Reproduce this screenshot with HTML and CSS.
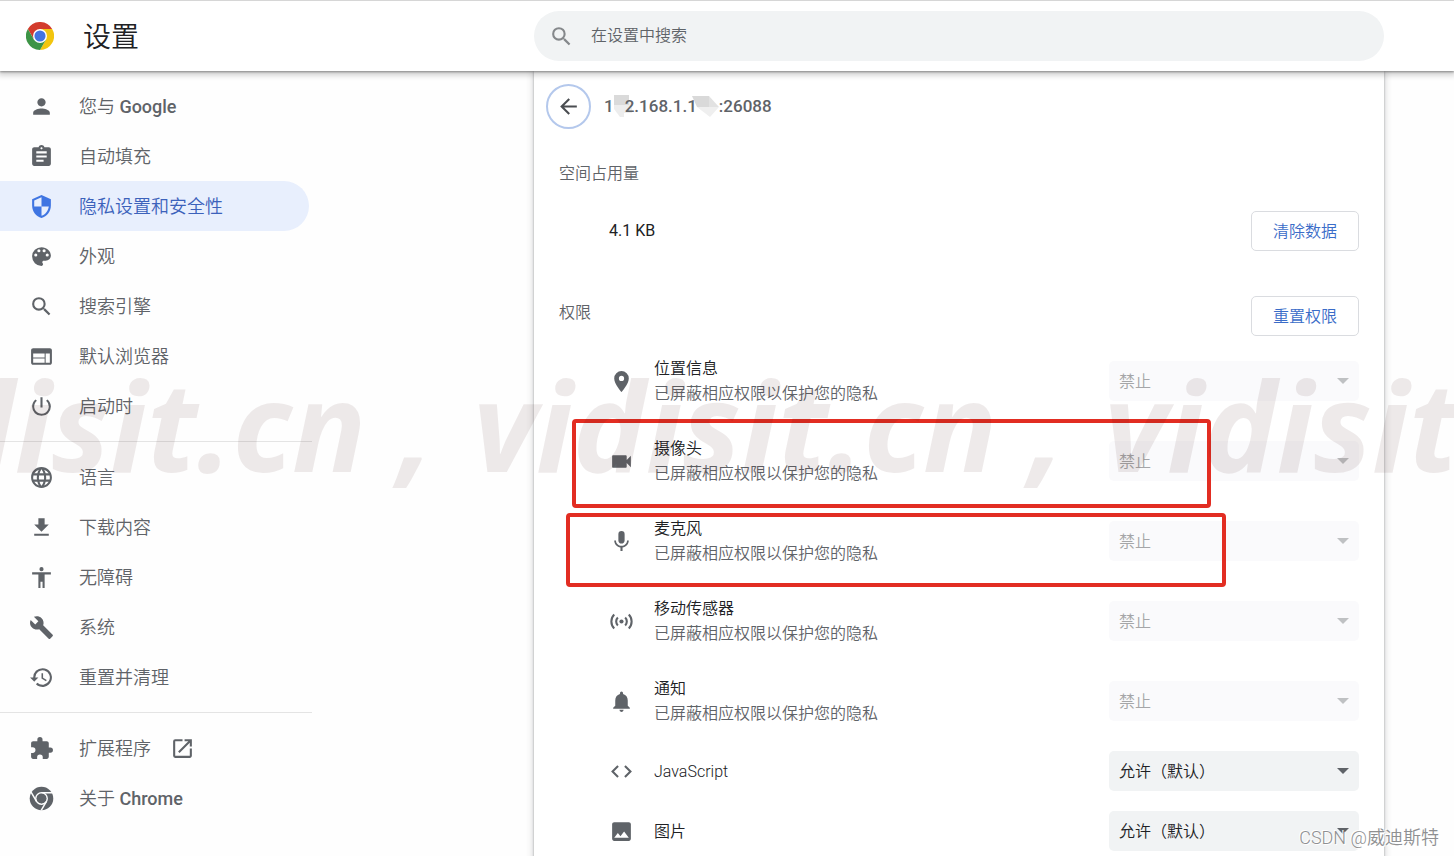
FILE: index.html
```
<!DOCTYPE html>
<html lang="zh-CN">
<head>
<meta charset="utf-8">
<title>设置</title>
<link rel="stylesheet" href="styles.css">
</head>
<body>
<header class="toolbar columns">
  <div class="brand">
    <svg class="logo" viewBox="0 0 48 48" aria-hidden="true">
      <circle cx="24" cy="24" r="24" fill="#fff"/>
      <path fill="#d33b2c" d="M24 12h20.8A24 24 0 0 0 3.2 12l10.4 18L24 12z"/>
      <path fill="#f2c50f" d="M34.4 30L24 48A24 24 0 0 0 44.8 12H24l10.4 18z"/>
      <path fill="#3d9446" d="M13.6 30L3.2 12A24 24 0 0 0 24 48l10.4-18H13.6z"/>
      <circle cx="24" cy="24" r="12" fill="#fff"/>
      <circle cx="24" cy="24" r="9.5" fill="#4374e0"/>
    </svg>
    <h1 class="title">设置</h1>
  </div>
  <div class="search">
    <svg class="icon search-icon" viewBox="0 0 24 24" aria-hidden="true"><path d="M15.5 14h-.79l-.28-.27A6.47 6.47 0 0 0 16 9.5 6.5 6.5 0 1 0 9.5 16c1.61 0 3.09-.59 4.23-1.57l.27.28v.79l5 4.99L20.49 19l-4.99-5zm-6 0a4.5 4.5 0 1 1 0-9 4.5 4.5 0 0 1 0 9z"/></svg>
    <input class="search-input" type="text" placeholder="在设置中搜索" aria-label="在设置中搜索">
  </div>
</header>

<div class="body columns">
  <nav class="sidebar">
    <a class="nav-item" href="#"><svg class="icon" viewBox="0 0 24 24"><path d="M12 12c2.21 0 4-1.79 4-4s-1.79-4-4-4-4 1.79-4 4 1.79 4 4 4zm0 2c-2.67 0-8 1.34-8 4v2h16v-2c0-2.66-5.33-4-8-4z"/></svg><span>您与 <span class="latin">Google</span></span></a>
    <a class="nav-item" href="#"><svg class="icon" viewBox="0 0 24 24"><path d="M19 3h-4.18C14.4 1.84 13.3 1 12 1s-2.4.84-2.82 2H5c-1.1 0-2 .9-2 2v14c0 1.1.9 2 2 2h14c1.1 0 2-.9 2-2V5c0-1.1-.9-2-2-2zm-7 0c.55 0 1 .45 1 1s-.45 1-1 1-1-.45-1-1 .45-1 1-1zm2 14H7v-2h7v2zm3-4H7v-2h10v2zm0-4H7V7h10v2z"/></svg><span>自动填充</span></a>
    <a class="nav-item selected" href="#" aria-current="page"><svg class="icon" viewBox="0 0 24 24"><path d="M12 1L3 5v6c0 5.55 3.84 10.74 9 12 5.16-1.26 9-6.45 9-12V5l-9-4zm0 10.99h7c-.53 4.12-3.28 7.79-7 8.94V12H5V6.3l7-3.11v8.8z"/></svg><span>隐私设置和安全性</span></a>
    <a class="nav-item" href="#"><svg class="icon" viewBox="0 0 24 24"><path d="M12 3a9 9 0 0 0 0 18c.83 0 1.5-.67 1.5-1.5 0-.39-.15-.74-.39-1.01-.23-.26-.38-.61-.38-.99 0-.83.67-1.5 1.5-1.5H16c2.76 0 5-2.24 5-5 0-4.42-4.03-8-9-8zm-5.5 9a1.5 1.5 0 1 1 0-3 1.5 1.5 0 0 1 0 3zm3-4a1.5 1.5 0 1 1 0-3 1.5 1.5 0 0 1 0 3zm5 0a1.5 1.5 0 1 1 0-3 1.5 1.5 0 0 1 0 3zm3 4a1.5 1.5 0 1 1 0-3 1.5 1.5 0 0 1 0 3z"/></svg><span>外观</span></a>
    <a class="nav-item" href="#"><svg class="icon" viewBox="0 0 24 24"><path d="M15.5 14h-.79l-.28-.27A6.47 6.47 0 0 0 16 9.5 6.5 6.5 0 1 0 9.5 16c1.61 0 3.09-.59 4.23-1.57l.27.28v.79l5 4.99L20.49 19l-4.99-5zm-6 0a4.5 4.5 0 1 1 0-9 4.5 4.5 0 0 1 0 9z"/></svg><span>搜索引擎</span></a>
    <a class="nav-item" href="#"><svg class="icon" viewBox="0 0 24 24"><path d="M20 4H4c-1.1 0-2 .9-2 2v12c0 1.100.9 2 2 2h16c1.100 0 2-.9 2-2V6c0-1.100-.9-2-2-2zm-5 14H4v-4h11v4zm0-5H4V9h11v4zm5 5h-4V9h4v9z"/></svg><span>默认浏览器</span></a>
    <a class="nav-item" href="#"><svg class="icon" viewBox="0 0 24 24"><path d="M13 3h-2v10h2V3zm4.830 2.170l-1.420 1.420A6.920 6.920 0 0 1 19 12a7 7 0 1 1-11.420-5.420L6.170 5.170A8.930 8.930 0 0 0 3 12a9 9 0 0 0 18 0c0-2.740-1.230-5.180-3.170-6.830z"/></svg><span>启动时</span></a>
    <hr class="divider">
    <a class="nav-item" href="#"><svg class="icon" viewBox="0 0 24 24"><path d="M11.990 2C6.470 2 2 6.480 2 12s4.470 10 9.990 10C17.520 22 22 17.520 22 12S17.520 2 11.990 2zm6.930 6h-2.950a15.650 15.650 0 0 0-1.380-3.560A8.030 8.030 0 0 1 18.920 8zM12 4.040c.83 1.200 1.480 2.530 1.910 3.960h-3.820c.43-1.430 1.080-2.760 1.910-3.960zM4.260 14a8.240 8.240 0 0 1 0-4h3.380a16.520 16.520 0 0 0 0 4H4.260zm.82 2h2.950c.32 1.250.78 2.450 1.380 3.560A7.990 7.990 0 0 1 5.080 16zm2.950-8H5.080a7.990 7.990 0 0 1 4.330-3.560A15.650 15.650 0 0 0 8.030 8zM12 19.960c-.83-1.200-1.480-2.530-1.910-3.960h3.820c-.43 1.430-1.080 2.760-1.910 3.960zM14.340 14H9.660a14.700 14.700 0 0 1 0-4h4.680a14.600 14.600 0 0 1 0 4zm.25 5.560c.6-1.110 1.060-2.310 1.380-3.560h2.950a8.030 8.030 0 0 1-4.330 3.560zM16.360 14a16.520 16.520 0 0 0 0-4h3.380a8.240 8.240 0 0 1 0 4h-3.380z"/></svg><span>语言</span></a>
    <a class="nav-item" href="#"><svg class="icon" viewBox="0 0 24 24"><path d="M19 9h-4V3H9v6H5l7 7 7-7zM5 18v2h14v-2H5z"/></svg><span>下载内容</span></a>
    <a class="nav-item" href="#"><svg class="icon" viewBox="0 0 24 24"><path d="M12 2a2 2 0 1 1 0 4 2 2 0 0 1 0-4zm9 7h-6v13h-2v-6h-2v6H9V9H3V7h18v2z"/></svg><span>无障碍</span></a>
    <a class="nav-item" href="#"><svg class="icon" viewBox="0 0 24 24"><path d="M22.700 19l-9.100-9.100c.9-2.300.4-5-1.500-6.900-2-2-5-2.400-7.400-1.300L9 6 6 9 1.600 4.700C.4 7.100.9 10.100 2.900 12.100c1.900 1.900 4.600 2.400 6.900 1.500l9.100 9.100c.4.4 1 .4 1.400 0l2.300-2.300c.5-.4.5-1.100.1-1.400z"/></svg><span>系统</span></a>
    <a class="nav-item" href="#"><svg class="icon" viewBox="0 0 24 24"><path d="M13 3a9 9 0 0 0-9 9H1l3.890 3.890.07.14L9 12H6a7 7 0 1 1 2.060 4.940l-1.420 1.420A9 9 0 1 0 13 3zm-1 5v5l4.280 2.540.72-1.210-3.500-2.080V8H12z"/></svg><span>重置并清理</span></a>
    <hr class="divider">
    <a class="nav-item" href="#"><svg class="icon" viewBox="0 0 24 24"><path d="M20.500 11H19V7c0-1.100-.9-2-2-2h-4V3.500a2.500 2.500 0 0 0-5 0V5H4c-1.100 0-1.990.9-1.990 2v3.800H3.500a2.700 2.700 0 0 1 0 5.400H2V20c0 1.100.9 2 2 2h3.800v-1.500a2.700 2.700 0 0 1 5.400 0V22H17c1.100 0 2-.9 2-2v-4h1.500a2.500 2.500 0 0 0 0-5z"/></svg><span>扩展程序</span><svg class="icon external" viewBox="0 0 24 24"><path d="M19 19H5V5h7V3H5a2 2 0 0 0-2 2v14a2 2 0 0 0 2 2h14c1.100 0 2-.9 2-2v-7h-2v7zM14 3v2h3.590l-9.830 9.830 1.410 1.410L19 6.410V10h2V3h-7z"/></svg></a>
    <a class="nav-item" href="#"><svg class="icon" viewBox="0 0 24 24"><circle cx="12" cy="12" r="11.300"/><circle class="cut" cx="12" cy="12" r="5.500"/><path class="cut" d="M12 6.500h10.500M7.200 14.700L2 5.800M16.800 14.700L11.700 23.500"/><circle cx="12" cy="12" r="4.500"/></svg><span>关于 <span class="latin">Chrome</span></span></a>
  </nav>

  <main class="card">
    <div class="page-head">
      <button class="back" type="button" aria-label="返回"><svg class="icon" viewBox="0 0 24 24"><path d="M20 11H7.830l5.590-5.590L12 4l-8 8 8 8 1.410-1.410L7.830 13H20v-2z"/></svg></button>
      <h2 class="site">1<svg class="mask mask-short" viewBox="0 0 19 24" aria-hidden="true"><path fill="#dadada" d="M0 0h15v10H0z"/><path fill="#ededed" d="M0 10h15v-3l3 1v10h-8v4H6l-6-8z"/></svg>2.168.1.1<svg class="mask mask-long" viewBox="0 0 27 24" aria-hidden="true"><path fill="#d9d9d9" d="M0 1h17v11H5z"/><path fill="#e2e2e2" d="M17 1l10 11H17z"/><path fill="#efefef" d="M5 12h22l-9 10z"/></svg>:26088</h2>
    </div>
    <h3 class="section">空间占用量</h3>
    <div class="usage">
      <span>4.1 KB</span>
      <button class="action" type="button">清除数据</button>
    </div>
    <div class="permissions-head">
      <h3 class="section">权限</h3>
      <button class="action" type="button">重置权限</button>
    </div>
    <ul class="permissions">
      <li class="row">
        <svg class="icon" viewBox="0 0 24 24"><path d="M12 2a7 7 0 0 0-7 7c0 5.250 7 13 7 13s7-7.750 7-13a7 7 0 0 0-7-7zm0 9.500a2.500 2.500 0 1 1 0-5 2.500 2.500 0 0 1 0 5z"/></svg>
        <div class="label"><label for="p1">位置信息</label><span class="note">已屏蔽相应权限以保护您的隐私</span></div>
        <div class="picker off"><select id="p1" disabled><option>禁止</option></select></div>
      </li>
      <li class="row">
        <svg class="icon" viewBox="0 0 24 24"><path d="M17 10.500V7c0-.55-.45-1-1-1H4c-.55 0-1 .45-1 1v10c0 .55.45 1 1 1h12c.55 0 1-.45 1-1v-3.500l4 4v-11l-4 4z"/></svg>
        <div class="label"><label for="p2">摄像头</label><span class="note">已屏蔽相应权限以保护您的隐私</span></div>
        <div class="picker off"><select id="p2" disabled><option>禁止</option></select></div>
        <div class="mark mark-camera"></div>
      </li>
      <li class="row">
        <svg class="icon" viewBox="0 0 24 24"><path d="M12 14c1.660 0 2.990-1.340 2.990-3L15 5a3 3 0 0 0-6 0v6c0 1.660 1.340 3 3 3zm5.300-3c0 3-2.540 5.100-5.300 5.100S6.700 14 6.700 11H5c0 3.410 2.720 6.230 6 6.720V21h2v-3.280c3.280-.48 6-3.300 6-6.720h-1.700z"/></svg>
        <div class="label"><label for="p3">麦克风</label><span class="note">已屏蔽相应权限以保护您的隐私</span></div>
        <div class="picker off"><select id="p3" disabled><option>禁止</option></select></div>
        <div class="mark mark-mic"></div>
      </li>
      <li class="row">
        <svg class="icon" viewBox="0 0 24 24"><circle cx="12" cy="12" r="2"/><path class="wave" d="M8.500 8.200a5.300 5.300 0 0 0 0 7.600M15.500 8.200a5.300 5.300 0 0 1 0 7.600M5 5.300a9.600 9.600 0 0 0 0 13.400M19 5.300a9.600 9.600 0 0 1 0 13.400"/></svg>
        <div class="label"><label for="p4">移动传感器</label><span class="note">已屏蔽相应权限以保护您的隐私</span></div>
        <div class="picker off"><select id="p4" disabled><option>禁止</option></select></div>
      </li>
      <li class="row">
        <svg class="icon" viewBox="0 0 24 24"><path d="M12 22c1.100 0 2-.9 2-2h-4a2 2 0 0 0 2 2zm6-6v-5c0-3.070-1.640-5.640-4.500-6.320V4a1.500 1.500 0 0 0-3 0v.68C7.630 5.360 6 7.920 6 11v5l-2 2v1h16v-1l-2-2z"/></svg>
        <div class="label"><label for="p5">通知</label><span class="note">已屏蔽相应权限以保护您的隐私</span></div>
        <div class="picker off"><select id="p5" disabled><option>禁止</option></select></div>
      </li>
      <li class="row single">
        <svg class="icon" viewBox="0 0 24 24"><path d="M9.400 16.600L4.800 12l4.600-4.600L8 6l-6 6 6 6 1.400-1.400zm5.200 0l4.600-4.600-4.600-4.600L16 6l6 6-6 6-1.400-1.400z"/></svg>
        <div class="label"><label for="p6">JavaScript</label></div>
        <div class="picker"><select id="p6"><option>允许（默认）</option></select></div>
      </li>
      <li class="row single">
        <svg class="icon" viewBox="0 0 24 24"><path d="M21 19V5c0-1.100-.9-2-2-2H5c-1.100 0-2 .9-2 2v14c0 1.100.9 2 2 2h14c1.100 0 2-.9 2-2zM8.500 13.500l2.500 3.010L14.500 12l4.500 6H5l3.500-4.500z"/></svg>
        <div class="label"><label for="p7">图片</label></div>
        <div class="picker"><select id="p7"><option>允许（默认）</option></select></div>
      </li>
    </ul>
  </main>
</div>

<div class="watermark" aria-hidden="true"><span>vidisit.cn ,</span><span>vidisit.cn ,</span><span>vidisit.cn</span></div>
<div class="credit">CSDN @威迪斯特</div>
</body>
</html>
```

FILE: styles.css
```
* {
  box-sizing: border-box;
}

body {
  margin: 0;
  height: 100vh;
  display: flex;
  flex-direction: column;
  position: relative;
  overflow: hidden;
  background: #fefefe;
  color: #202124;
  font-family: Roboto, "Noto Sans CJK SC", sans-serif;
  font-size: 16px;
  font-weight: 350;
  line-height: 24px;
}

h1, h2, h3, ul {
  margin: 0;
  padding: 0;
  font-size: inherit;
  font-weight: inherit;
}

button, select, input {
  font: inherit;
}

.columns {
  display: grid;
  grid-template-columns: minmax(312px, 534fr) minmax(0, 850px) minmax(0, 70fr);
}

.icon {
  flex: none;
  width: 25px;
  height: 25px;
  fill: #5f6368;
}

.toolbar {
  flex: none;
  position: relative;
  z-index: 1;
  align-items: center;
  padding: 10px 0;
  border-top: 1px solid #d6d6d6;
  background: #fff;
  box-shadow: 0 1px 2px rgba(0, 0, 0, 0.36), 0 2px 6px 2px rgba(0, 0, 0, 0.2);
}

.brand {
  display: flex;
  align-items: center;
  gap: 29px;
  padding-left: 26px;
}

.logo {
  width: 28px;
  height: 28px;
}

.title {
  padding-top: 4px;
  font-size: 28px;
  line-height: 40px;
}

.search {
  display: flex;
  align-items: center;
  gap: 17px;
  height: 50px;
  padding: 0 15px;
  border-radius: 25px;
  background: #f1f3f4;
}

.search-icon {
  fill: #85888b;
}

.search-input {
  flex: 1;
  min-width: 0;
  padding: 0;
  border: 0;
  outline: 0;
  background: none;
  color: #202124;
}

.search-input::placeholder {
  color: #5f6368;
  opacity: 1;
}

.body {
  flex: 1;
  min-height: 0;
}

.sidebar {
  width: 312px;
  padding: 10px 0;
}

.nav-item {
  display: flex;
  align-items: center;
  gap: 25px;
  height: 50px;
  margin-right: 3px;
  padding-left: 29px;
  border-radius: 0 25px 25px 0;
  color: #5f6368;
  font-size: 18px;
  text-decoration: none;
}

.nav-item > span {
  padding-top: 2px;
}

.latin {
  font-weight: 500;
}

.selected {
  background: #e8effd;
  color: #3c62bb;
}

.selected .icon {
  fill: #3f75e2;
}

.external {
  margin-left: -6px;
}

.cut {
  fill: none;
  stroke: #fefefe;
  stroke-width: 1.4;
}

.divider {
  height: 1px;
  margin: 10px 0;
  border: 0;
  background: #e4e4e4;
}

.card {
  padding-top: 13px;
  background: #fff;
  box-shadow: 0 1px 2px rgba(60, 64, 67, 0.4), 0 1px 6px 2px rgba(60, 64, 67, 0.16);
}

.page-head {
  display: flex;
  align-items: center;
  gap: 13px;
  padding-left: 12px;
}

.back {
  display: flex;
  align-items: center;
  justify-content: center;
  width: 45px;
  height: 45px;
  padding: 0;
  border: 2px solid #b4c8ec;
  border-radius: 50%;
  background: none;
}

.back .icon {
  fill: #4a4d51;
}

.site {
  color: #5f6368;
  font-size: 17px;
  font-weight: 500;
}

.mask {
  height: 24px;
  vertical-align: middle;
  overflow: visible;
}

.mask-short {
  width: 19px;
  margin-right: -8px;
}

.mask-long {
  width: 27px;
  margin-left: -5px;
}

.section {
  padding-left: 25px;
  color: #5f6368;
}

.page-head + .section {
  margin-top: 33px;
}

.usage {
  display: flex;
  align-items: center;
  justify-content: space-between;
  margin-top: 25px;
  padding: 0 25px 0 75px;
  font-weight: 400;
}

.action {
  height: 40px;
  padding: 2px 21px 0;
  border: 1px solid #dadce0;
  border-radius: 5px;
  background: #fff;
  color: #3a6cc8;
  font-weight: 350;
}

.permissions-head {
  display: flex;
  justify-content: space-between;
  margin-top: 45px;
  padding-right: 25px;
}

.permissions-head .section {
  padding-top: 5px;
}

.permissions {
  margin-top: 5px;
  list-style: none;
}

.row {
  position: relative;
  display: flex;
  align-items: center;
  gap: 20px;
  height: 80px;
  padding: 0 25px 0 75px;
}

.single {
  height: 60px;
}

.label {
  flex: 1;
  display: flex;
  flex-direction: column;
  line-height: 25px;
}

.note {
  color: #5f6368;
}

.wave {
  fill: none;
  stroke: #5f6368;
  stroke-width: 2;
}

.picker {
  position: relative;
  width: 250px;
}

.picker::after {
  content: "";
  position: absolute;
  top: 17px;
  right: 10px;
  border: 6px solid transparent;
  border-top-color: #5f6368;
  border-bottom: 0;
  pointer-events: none;
}

.picker select {
  display: block;
  width: 100%;
  height: 40px;
  padding: 2px 10px 0;
  border: 0;
  border-radius: 5px;
  appearance: none;
  background: #f1f3f4;
  color: #202124;
  opacity: 1;
}

.picker.off select {
  background: #fafafc;
  color: #a5a6a8;
}

.picker.off::after {
  border-top-color: #bfc1c3;
}

.mark {
  position: absolute;
  border: 4px solid #e22d22;
  border-radius: 4px;
  pointer-events: none;
}

.mark-camera {
  top: -2px;
  right: 173px;
  bottom: -7px;
  left: 38px;
}

.mark-mic {
  top: 12px;
  right: 158px;
  bottom: -6px;
  left: 32px;
}

.watermark {
  position: absolute;
  z-index: 2;
  top: 335px;
  left: -158px;
  display: flex;
  color: rgba(70, 20, 20, 0.09);
  font: italic 700 123px/180px "Noto Sans", "Open Sans", sans-serif;
  white-space: nowrap;
  pointer-events: none;
}

.watermark span {
  flex: none;
  width: 631px;
}

.credit {
  position: absolute;
  z-index: 3;
  right: 15px;
  bottom: 6px;
  color: #8f9092;
  font-size: 18px;
  text-shadow: 1px 1px 0 #fff, -1px -1px 0 #fff;
}
```
